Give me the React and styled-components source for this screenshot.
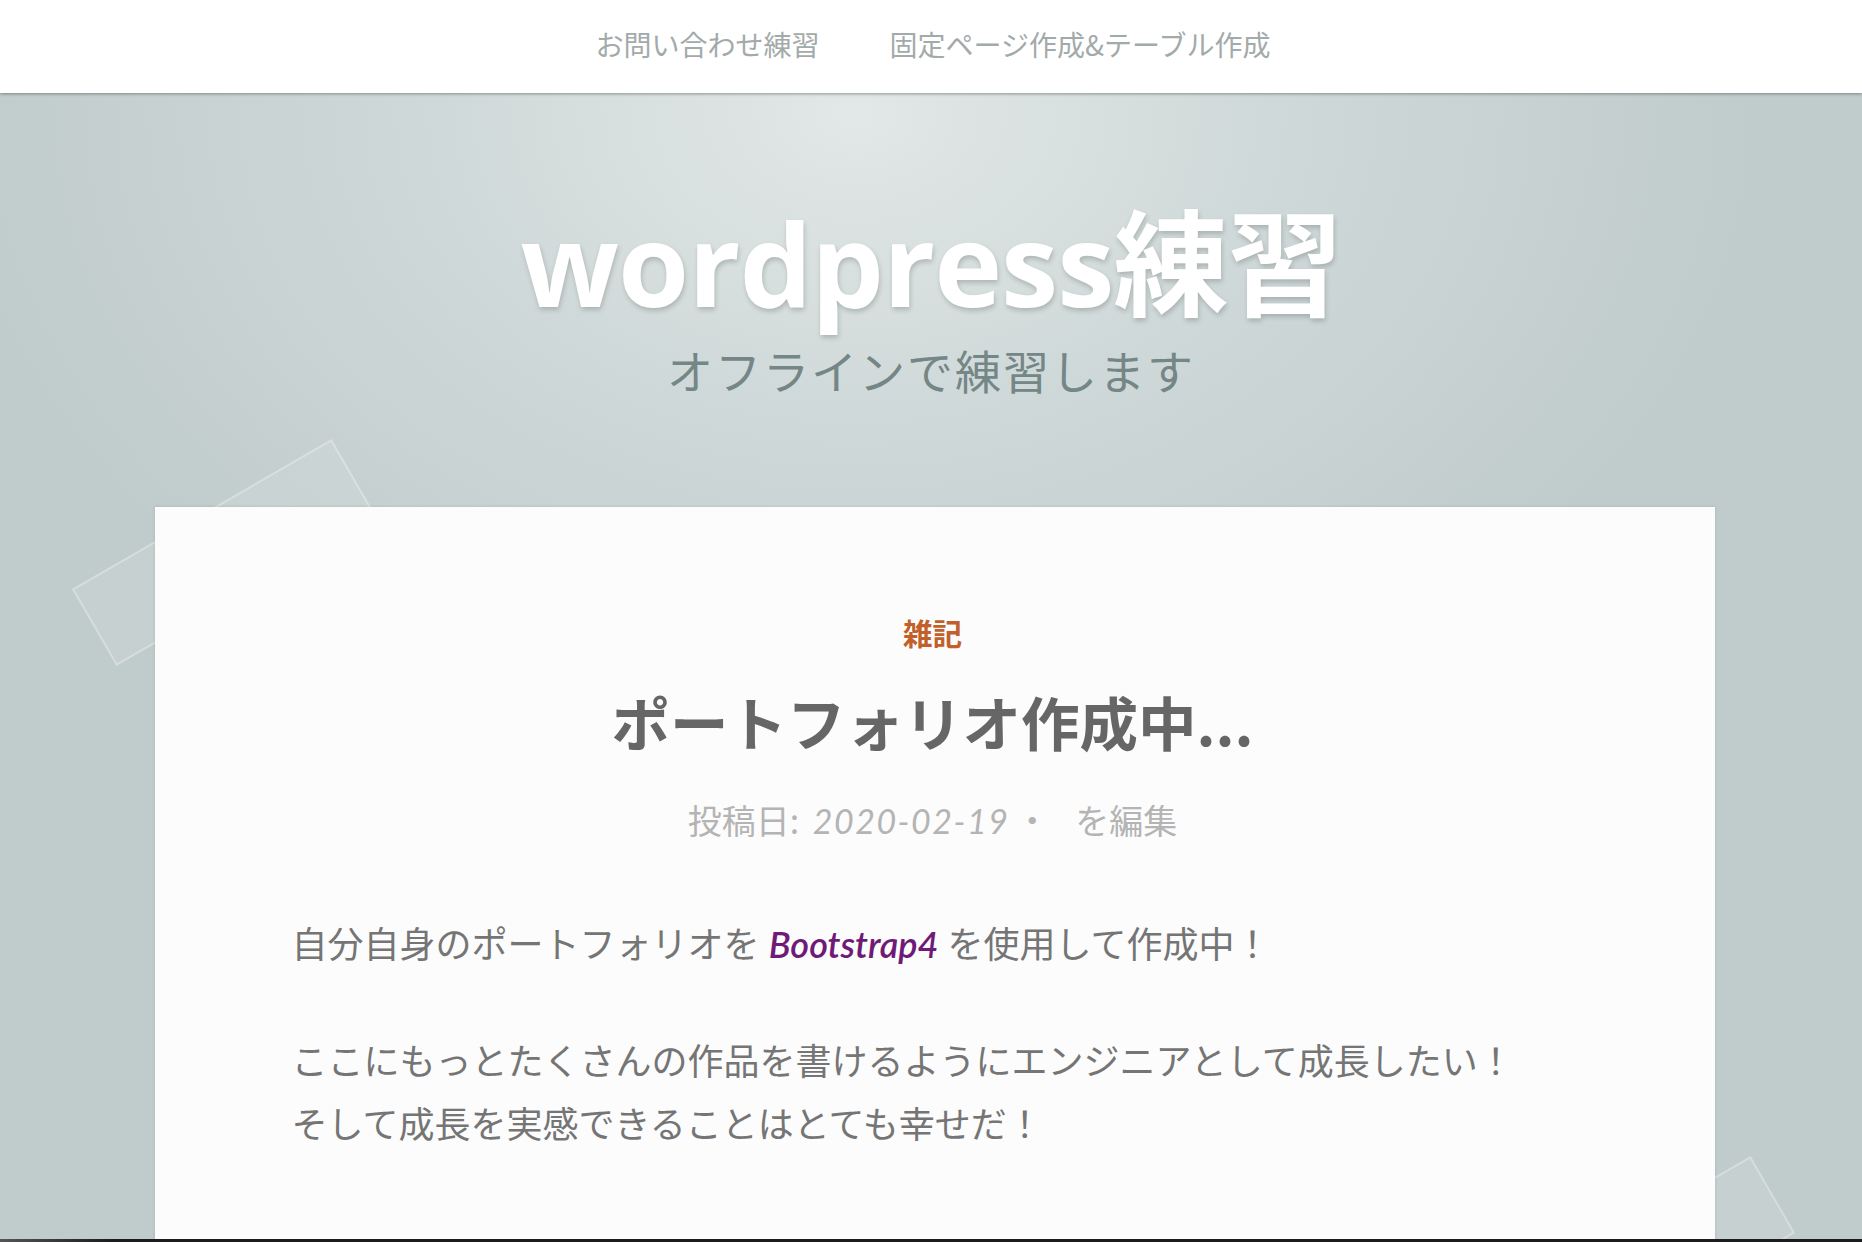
import styled, { createGlobalStyle } from 'styled-components';

const GlobalStyle = createGlobalStyle`
    html, body {
        margin: 0;
        padding: 0;
        background: #c0cbcb;
    }
    * {
        box-sizing: border-box;
    }
`;

const navItems = ['お問い合わせ練習', '固定ページ作成&テーブル作成'];

export default function App() {
    return (
        <Page>
            <GlobalStyle />
            <Header>
                <Nav>
                    {navItems.map((item) => (
                        <NavLink key={item} href="#">{item}</NavLink>
                    ))}
                </Nav>
            </Header>

            <Hero>
                {/* background shapes, offsets are relative to the hero */}
                <Deco $left={74} $top={415} />
                <Deco $left={1493} $top={1132} />

                <SiteTitle>wordpress練習</SiteTitle>
                <Tagline>オフラインで練習します</Tagline>

                <Card>
                    <Category href="#">雑記</Category>
                    <PostTitle>ポートフォリオ作成中...</PostTitle>
                    <Meta>
                        投稿日: <DateText>2020-02-19</DateText>
                        <Dot>・</Dot>
                        <EditLink href="#">を編集</EditLink>
                    </Meta>
                    <Body>
                        <Para>
                            自分自身のポートフォリオを <Accent href="#">Bootstrap4</Accent> を使用して作成中！
                        </Para>
                        <Para>
                            ここにもっとたくさんの作品を書けるようにエンジニアとして成長したい！<br />
                            そして成長を実感できることはとても幸せだ！
                        </Para>
                    </Body>
                </Card>
            </Hero>
        </Page>
    );
}

const Page = styled.div`
    position: relative;
    width: 100%;
    height: 1242px;
    overflow: hidden;
    font-family: Lato, "Noto Sans CJK JP", sans-serif;
    &::after {
        content: "";
        position: absolute;
        left: 0;
        right: 0;
        bottom: 0;
        height: 3px;
        background: linear-gradient(90deg, #555 0%, #1c1c1c 6%, #1c1c1c 100%);
        z-index: 10;
    }
`;

const Header = styled.header`
    position: relative;
    z-index: 3;
    height: 93px;
    background: #ffffff;
    box-shadow: 0 1px 3px rgba(0, 0, 0, 0.35);
    display: flex;
    align-items: center;
    justify-content: center;
`;

const Nav = styled.nav`
    display: flex;
    gap: 70px;
    margin-left: 4px;
    margin-top: -6px;
`;

const NavLink = styled.a`
    font-family: "Noto Sans CJK JP", sans-serif;
    font-size: 28px;
    color: #a3aaaa;
    text-decoration: none;
`;

const Hero = styled.main`
    position: relative;
    height: calc(100% - 93px);
    display: flex;
    flex-direction: column;
    align-items: center;
    padding-top: 103px;
    background: radial-gradient(ellipse 900px 650px at 855px 20px, #e2e7e7 0%, #d0d9d9 45%, #c0cbcb 100%);
`;

const Deco = styled.div`
    position: absolute;
    left: ${(p) => p.$left}px;
    top: ${(p) => p.$top}px;
    width: 300px;
    height: 89px;
    transform: rotate(-30deg);
    background: rgba(255, 255, 255, 0.1);
    border: 2px solid rgba(255, 255, 255, 0.28);
    z-index: 0;
`;

const SiteTitle = styled.h1`
    position: relative;
    z-index: 1;
    margin: 0;
    font-family: "Open Sans", "Noto Sans CJK JP", sans-serif;
    font-weight: 700;
    font-size: 115px;
    line-height: 134px;
    letter-spacing: -1px;
    color: #ffffff;
    text-shadow: 1px 3px 5px rgba(0, 0, 0, 0.18);
`;

const Tagline = styled.p`
    position: relative;
    z-index: 1;
    margin: 12px 0 0;
    font-family: "Noto Sans CJK JP", sans-serif;
    font-size: 46px;
    line-height: 55px;
    letter-spacing: 2px;
    color: #748686;
`;

const Card = styled.article`
    position: relative;
    z-index: 2;
    margin: 110px 0 0 7px;
    width: 1560px;
    flex: 1;
    padding: 104px 141px 0 137px;
    background: #fcfcfc;
    box-shadow: 0 0 3px rgba(0, 0, 0, 0.12);
    display: flex;
    flex-direction: column;
    align-items: center;
`;

const Category = styled.a`
    font-family: "Noto Sans CJK JP", sans-serif;
    font-weight: 700;
    font-size: 29.5px;
    line-height: 42px;
    color: #c2602b;
    text-decoration: none;
`;

const PostTitle = styled.h2`
    margin: 31px 0 0;
    font-family: "Noto Sans CJK JP", sans-serif;
    font-weight: 700;
    font-size: 58.5px;
    line-height: 74px;
    color: #666666;
`;

const Meta = styled.div`
    margin-top: 36px;
    font-family: "Noto Sans CJK JP", sans-serif;
    font-size: 34px;
    line-height: 51px;
    color: #b4b4b4;
`;

const DateText = styled.time`
    font-family: Lato, sans-serif;
    font-style: italic;
    font-size: 34px;
    letter-spacing: 1.5px;
    margin-left: 6px;
`;

const Dot = styled.span`
    margin: 0 26px 0 6px;
`;

const EditLink = styled.a`
    color: #b4b4b4;
    text-decoration: none;
`;

const Body = styled.div`
    align-self: stretch;
    margin-top: 67px;
`;

const Para = styled.p`
    margin: 0 0 54px;
    font-family: Lato, "Noto Sans CJK JP", sans-serif;
    font-size: 36px;
    line-height: 63px;
    color: #757575;
`;

const Accent = styled.a`
    font-family: Lato, sans-serif;
    font-style: italic;
    font-weight: 600;
    color: #6f1a78;
    text-decoration: none;
`;
